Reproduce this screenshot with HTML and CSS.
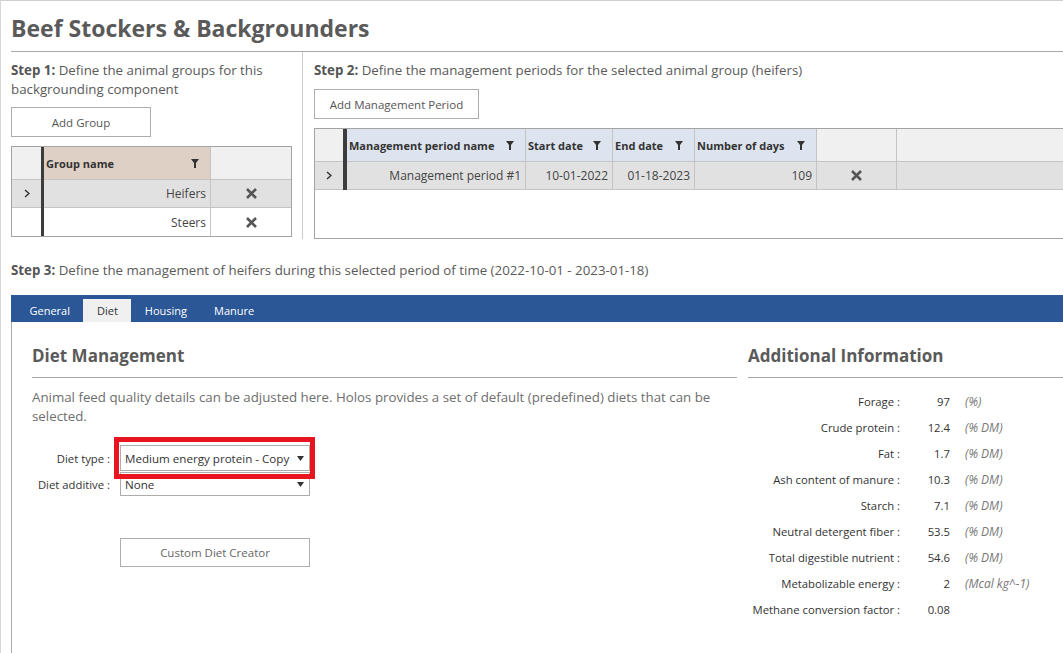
FILE: index.html
```html
<!DOCTYPE html>
<html lang="en">
<head>
<meta charset="utf-8">
<title>Beef Stockers &amp; Backgrounders</title>
<link rel="stylesheet" href="styles.css">
</head>
<body>
<div class="page">
  <header class="title-bar">
    <h1 class="title">Beef Stockers &amp; Backgrounders</h1>
  </header>

  <section class="steps">
    <div class="step step-one">
      <p class="step-text"><b>Step 1:</b> <span>Define the animal groups for this backgrounding component</span></p>
      <button class="btn btn-add-group">Add Group</button>
      <div class="dg dg-groups">
        <div class="cell ind hdr"></div>
        <div class="bar"></div>
        <div class="cell hdr hdr-tan"><span>Group name</span><svg class="filter" width="8" height="9" viewBox="0 0 8 9"><path d="M0 0H8L5 4V9H3V4Z"/></svg></div>
        <div class="cell hdr last"></div>

        <div class="cell ind sel"><svg class="chev" width="6" height="9" viewBox="0 0 6 9"><path d="M1 1L5 4.5L1 8"/></svg></div>
        <div class="bar"></div>
        <div class="cell num sel">Heifers</div>
        <div class="cell del sel last"><svg class="x" width="13" height="13" viewBox="0 0 13 13"><path d="M2 2L11 11M11 2L2 11"/></svg></div>

        <div class="cell ind nob"></div>
        <div class="bar"></div>
        <div class="cell num nob">Steers</div>
        <div class="cell del last nob"><svg class="x" width="13" height="13" viewBox="0 0 13 13"><path d="M2 2L11 11M11 2L2 11"/></svg></div>
      </div>
    </div>

    <div class="step step-two">
      <p class="step-text"><b>Step 2:</b> Define the management periods for the selected animal group (heifers)</p>
      <button class="btn btn-add-period">Add Management Period</button>
      <div class="dg dg-periods">
        <div class="cell ind hdr"></div>
        <div class="bar"></div>
        <div class="cell hdr hdr-blue"><span>Management period name</span><svg class="filter" width="8" height="9" viewBox="0 0 8 9"><path d="M0 0H8L5 4V9H3V4Z"/></svg></div>
        <div class="cell hdr hdr-blue"><span>Start date</span><svg class="filter" width="8" height="9" viewBox="0 0 8 9"><path d="M0 0H8L5 4V9H3V4Z"/></svg></div>
        <div class="cell hdr hdr-blue"><span>End date</span><svg class="filter" width="8" height="9" viewBox="0 0 8 9"><path d="M0 0H8L5 4V9H3V4Z"/></svg></div>
        <div class="cell hdr hdr-blue"><span>Number of days</span><svg class="filter" width="8" height="9" viewBox="0 0 8 9"><path d="M0 0H8L5 4V9H3V4Z"/></svg></div>
        <div class="cell hdr"></div>
        <div class="cell hdr last"></div>

        <div class="cell ind sel"><svg class="chev" width="6" height="9" viewBox="0 0 6 9"><path d="M1 1L5 4.5L1 8"/></svg></div>
        <div class="bar"></div>
        <div class="cell num sel">Management period #1</div>
        <div class="cell num sel">10-01-2022</div>
        <div class="cell num sel">01-18-2023</div>
        <div class="cell num sel">109</div>
        <div class="cell del sel"><svg class="x" width="13" height="13" viewBox="0 0 13 13"><path d="M2 2L11 11M11 2L2 11"/></svg></div>
        <div class="cell sel last"></div>
      </div>
    </div>
  </section>

  <p class="step-text step-three"><b>Step 3:</b> Define the management of heifers during this selected period of time (2022-10-01 - 2023-01-18)</p>

  <nav class="tabs">
    <span class="tab">General</span>
    <span class="tab active">Diet</span>
    <span class="tab">Housing</span>
    <span class="tab">Manure</span>
  </nav>

  <div class="tab-content">
    <div class="diet-col">
      <h2 class="section-title">Diet Management</h2>
      <p class="intro">Animal feed quality details can be adjusted here. Holos provides a set of default (predefined) diets that can be selected.</p>
      <div class="form">
        <div class="highlight"></div>
        <label class="form-label">Diet type :</label>
        <div class="combo combo-type"><span>Medium energy protein - Copy</span><svg class="caret" width="7" height="5" viewBox="0 0 7 5"><path d="M0 0H7L3.5 5Z"/></svg></div>
        <label class="form-label">Diet additive :</label>
        <div class="combo combo-add"><span>None</span><svg class="caret" width="7" height="5" viewBox="0 0 7 5"><path d="M0 0H7L3.5 5Z"/></svg></div>
      </div>
      <button class="btn btn-custom">Custom Diet Creator</button>
    </div>

    <div class="info-col">
      <h2 class="section-title">Additional Information</h2>
      <div class="info-grid">
        <span class="lbl">Forage :</span><span class="val">97</span><span class="unit">(%)</span>
        <span class="lbl">Crude protein :</span><span class="val">12.4</span><span class="unit">(% DM)</span>
        <span class="lbl">Fat :</span><span class="val">1.7</span><span class="unit">(% DM)</span>
        <span class="lbl">Ash content of manure :</span><span class="val">10.3</span><span class="unit">(% DM)</span>
        <span class="lbl">Starch :</span><span class="val">7.1</span><span class="unit">(% DM)</span>
        <span class="lbl">Neutral detergent fiber :</span><span class="val">53.5</span><span class="unit">(% DM)</span>
        <span class="lbl">Total digestible nutrient :</span><span class="val">54.6</span><span class="unit">(% DM)</span>
        <span class="lbl">Metabolizable energy :</span><span class="val">2</span><span class="unit">(Mcal kg^-1)</span>
        <span class="lbl">Methane conversion factor :</span><span class="val">0.08</span><span class="unit"></span>
      </div>
    </div>
  </div>
</div>
</body>
</html>
```

FILE: styles.css
```css
* { box-sizing: border-box; }

html, body {
  margin: 0;
  padding: 0;
  background: #ffffff;
}

body {
  font-family: "Open Sans", "Noto Sans", sans-serif;
  font-size: 12px;
  color: #555555;
  overflow: hidden;
}

.page {
  width: 1063px;
  height: 653px;
  border-top: 1px solid #cfcfcf;
  border-left: 1px solid #d6d6d6;
  padding-left: 10px;
  overflow: hidden;
}

/* ---------- title ---------- */
.title-bar {
  height: 51px;
  border-bottom: 1px solid #a9a9a9;
  padding-top: 14px;
}

.title {
  margin: 0;
  font-size: 23px;
  line-height: 26px;
  font-weight: 700;
  color: #5a5a5a;
}

/* ---------- steps ---------- */
.steps {
  display: flex;
  height: 187px;
}

.step-text {
  margin: 0;
  font-size: 13.3px;
  line-height: 19px;
  color: #5a5a5a;
}

.step-text b { font-weight: 700; color: #555; }

.step {
  padding-top: 9px;
  display: flex;
  flex-direction: column;
  align-items: flex-start;
}

.step-one {
  width: 292px;
  padding-right: 11px;
  border-right: 1px solid #cccccc;
}

.step-two {
  flex: 1;
  padding-left: 11px;
  min-width: 0;
}

.btn {
  font-family: inherit;
  font-size: 11.5px;
  color: #555555;
  background: #ffffff;
  border: 1px solid #adadad;
  height: 30px;
  padding: 0;
  cursor: default;
}

.btn-add-group { width: 140px; margin-top: 8px; }
.btn-add-period { width: 165px; margin-top: 9px; }

/* ---------- data grids ---------- */
.dg {
  display: grid;
  border: 1px solid #a3a3a3;
  font-size: 12px;
  color: #333333;
  margin-top: 9px;
}

.dg-groups {
  width: 281px;
  grid-template-columns: 29px 3px 167px 80px;
  grid-template-rows: 33px 28px 28px;
}

.dg-periods {
  width: 750px;
  height: 111px;
  border-right: none;
  grid-template-columns: 28px 4px 179px 87px 82px 122px 80px 1fr;
  grid-template-rows: 33px 28px;
  align-content: start;
}

.cell {
  border-right: 1px solid #c4c4c4;
  border-bottom: 1px solid #c4c4c4;
  display: flex;
  align-items: center;
  min-width: 0;
  white-space: nowrap;
}

.cell.last { border-right: none; }
.cell.nob { border-bottom: none; }
.ind { border-right: none; justify-content: center; }

.bar { background: #3c3c3c; }

.hdr {
  background: #f0f0f0;
  font-size: 11px;
  font-weight: 700;
  justify-content: space-between;
  padding: 0 11px 0 2px;
}

.hdr.ind { padding: 0; }

.hdr-tan { background: #dfd0c6; }
.hdr-blue { background: #dde4ef; }

.filter { fill: #333333; flex: none; margin-top: 1px; }

.sel { background: #e1e1e1; }

.num {
  justify-content: flex-end;
  padding-right: 4px;
  color: #444444;
}

.del { justify-content: center; }

.x {
  stroke: #555555;
  stroke-width: 2.6;
  fill: none;
}

.chev {
  stroke: #333333;
  stroke-width: 1.5;
  fill: none;
}

/* ---------- step 3 + tabs ---------- */
.step-three { margin-top: 22px; }

.tabs {
  margin-top: 15px;
  height: 27px;
  background: #2b5797;
  display: flex;
  align-items: flex-end;
  padding-left: 5px;
}

.tab {
  height: 23px;
  padding: 0 13.5px;
  font-size: 11px;
  line-height: 23px;
  color: #ffffff;
}

.tab.active {
  background: #f0f0f0;
  color: #333333;
}

/* ---------- tab content ---------- */
.tab-content {
  border-left: 1px solid #a9a9a9;
  height: 400px;
  padding-left: 20px;
  display: flex;
  gap: 11px;
}

.diet-col { width: 705px; flex: none; }
.info-col { flex: 1; }

.section-title {
  margin: 0;
  padding-top: 22px;
  padding-bottom: 9px;
  font-size: 17px;
  line-height: 24px;
  font-weight: 700;
  color: #5a5a5a;
  border-bottom: 1px solid #a6a6a6;
}

.intro {
  margin: 10px 0 0;
  font-size: 13.3px;
  line-height: 19px;
  color: #6e6e6e;
}

.form {
  position: relative;
  margin-top: 19px;
  display: grid;
  grid-template-columns: 78px 190px;
  column-gap: 10px;
  row-gap: 1px;
  align-items: center;
  width: 278px;
}

.form-label {
  text-align: right;
  font-size: 11.3px;
  color: #333333;
  white-space: nowrap;
}

.combo {
  position: relative;
  border: 1px solid #acacac;
  background: #ffffff;
  display: flex;
  align-items: center;
  justify-content: space-between;
  padding: 0 5px 0 4px;
  font-size: 11.6px;
  color: #333333;
}

.combo-type { height: 26px; }
.combo-add { height: 24px; }

.caret { fill: #333333; flex: none; }

.highlight {
  position: absolute;
  left: 82px;
  top: -8px;
  width: 201px;
  height: 42px;
  border: 5px solid #e8141f;
  z-index: 2;
  pointer-events: none;
}

.combo-type { z-index: 3; }

.btn-custom {
  display: block;
  margin: 42px 0 0 88px;
  width: 190px;
  height: 29px;
  color: #666666;
}

/* ---------- additional info ---------- */
.info-grid {
  margin-top: 10px;
  display: grid;
  grid-template-columns: 152px 50px auto;
  grid-auto-rows: 26px;
  align-items: center;
  font-size: 11.3px;
  color: #333333;
}

.lbl { text-align: right; white-space: nowrap; }
.val { text-align: right; }
.unit { padding-left: 15px; font-style: italic; font-size: 12px; color: #777777; }
```
